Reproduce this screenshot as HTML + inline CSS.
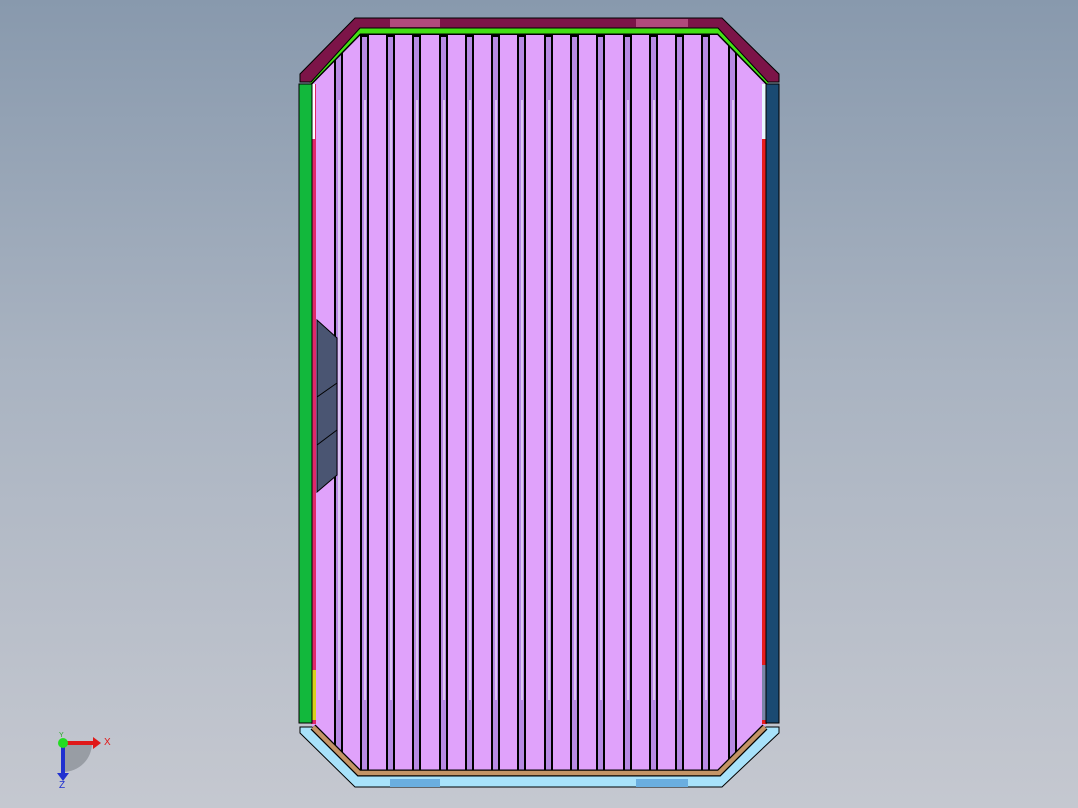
<!DOCTYPE html>
<html><head><style>
html,body{margin:0;padding:0;}
body{width:1078px;height:808px;overflow:hidden;background:linear-gradient(#8899ad 0%,#a9b3c1 45%,#c5c8d0 100%);}
svg{position:absolute;left:0;top:0;}
</style></head><body>
<svg width="1078" height="808" viewBox="0 0 1078 808">
<polygon points="360,33 718,33 765,80 765,730 718,776 360,776 312,730 312,80" fill="#e0a2fb"/>
<rect x="311" y="84" width="5" height="640" fill="#e0286a"/>
<rect x="312" y="84" width="3" height="55" fill="#ffffff"/>
<rect x="311" y="670" width="5" height="50" fill="#d7d21e"/>
<rect x="299" y="84" width="13" height="639" fill="#12b83c" stroke="#000" stroke-width="1"/>
<rect x="762" y="84" width="5" height="640" fill="#e81c1c"/>
<rect x="762" y="84" width="4" height="55" fill="#e8f8ff"/>
<rect x="762" y="665" width="5" height="55" fill="#7a86a8"/>
<rect x="766" y="84" width="13" height="639" fill="#1a4a72" stroke="#000" stroke-width="1"/>
<g fill="#b88ae4" stroke="#000" stroke-width="2">
<rect x="335" y="50" width="7" height="710"/>
<rect x="361" y="36" width="7" height="738"/>
<rect x="387" y="36" width="7" height="738"/>
<rect x="413" y="36" width="7" height="738"/>
<rect x="440" y="36" width="7" height="738"/>
<rect x="466" y="36" width="7" height="738"/>
<rect x="492" y="36" width="7" height="738"/>
<rect x="518" y="36" width="7" height="738"/>
<rect x="545" y="36" width="7" height="738"/>
<rect x="571" y="36" width="7" height="738"/>
<rect x="597" y="36" width="7" height="738"/>
<rect x="624" y="36" width="7" height="738"/>
<rect x="650" y="36" width="7" height="738"/>
<rect x="676" y="36" width="7" height="738"/>
<rect x="702" y="36" width="7" height="738"/>
<rect x="729" y="40" width="7" height="730"/>
</g>
<g stroke="#fff" stroke-width="1">
<line x1="339" y1="100" x2="339" y2="700"/><line x1="365" y1="100" x2="365" y2="700"/>
<line x1="391" y1="100" x2="391" y2="700"/><line x1="417" y1="100" x2="417" y2="700"/>
<line x1="444" y1="100" x2="444" y2="700"/><line x1="470" y1="100" x2="470" y2="700"/>
<line x1="496" y1="100" x2="496" y2="700"/><line x1="522" y1="100" x2="522" y2="700"/>
<line x1="549" y1="100" x2="549" y2="700"/><line x1="575" y1="100" x2="575" y2="700"/>
<line x1="601" y1="100" x2="601" y2="700"/><line x1="628" y1="100" x2="628" y2="700"/>
<line x1="654" y1="100" x2="654" y2="700"/><line x1="680" y1="100" x2="680" y2="700"/>
<line x1="706" y1="100" x2="706" y2="700"/><line x1="733" y1="100" x2="733" y2="700"/>
</g>
<polygon points="317,320 337,338 337,475 317,492" fill="#4a5572" stroke="#000" stroke-width="1"/>
<line x1="317" y1="397" x2="337" y2="383" stroke="#000"/>
<line x1="317" y1="445" x2="337" y2="430" stroke="#000"/>
<polyline points="309,82 359,31 719,31 769,82" fill="none" stroke="#000" stroke-width="8"/>
<polyline points="309,82 359,31 719,31 769,82" fill="none" stroke="#44e014" stroke-width="5"/>
<polygon points="355,18 722,18 779,74 779,82 768,82 718,28 360,28 311,82 300,82 300,74" fill="#7c1448" stroke="#000" stroke-width="1"/>
<rect x="390" y="19" width="50" height="8" fill="#b04a7c"/>
<rect x="636" y="19" width="52" height="8" fill="#b04a7c"/>
<polygon points="300,727 312,727 360,773 718,773 766,727 779,727 779,733 722,787 355,787 300,733" fill="#a8e2fa" stroke="#000" stroke-width="1"/>
<polyline points="313,727 359,773 719,773 765,727" fill="none" stroke="#000" stroke-width="7"/>
<polyline points="313,727 359,773 719,773 765,727" fill="none" stroke="#c49466" stroke-width="4.5"/>
<rect x="390" y="779" width="50" height="8" fill="#6aaee0"/>
<rect x="636" y="779" width="52" height="8" fill="#6aaee0"/>
<path d="M63,743 L63,772 A29,29 0 0 0 92,743 Z" fill="#8d929a" opacity="0.8"/>
<rect x="61" y="743" width="4" height="30" fill="#2030d0"/>
<polygon points="57,773 69,773 63,781" fill="#2030d0"/>
<rect x="63" y="741" width="30" height="4" fill="#e01818"/>
<polygon points="93,737 101,743 93,749" fill="#e01818"/>
<circle cx="63" cy="743" r="5" fill="#22dd22"/>
<text x="104" y="745" font-family="Liberation Sans,sans-serif" font-size="10" fill="#e01818">X</text>
<text x="59" y="788" font-family="Liberation Sans,sans-serif" font-size="10" fill="#2030d0">Z</text>
<text x="59" y="737" font-family="Liberation Sans,sans-serif" font-size="7" fill="#22aa22">Y</text>
</svg>
</body></html>
